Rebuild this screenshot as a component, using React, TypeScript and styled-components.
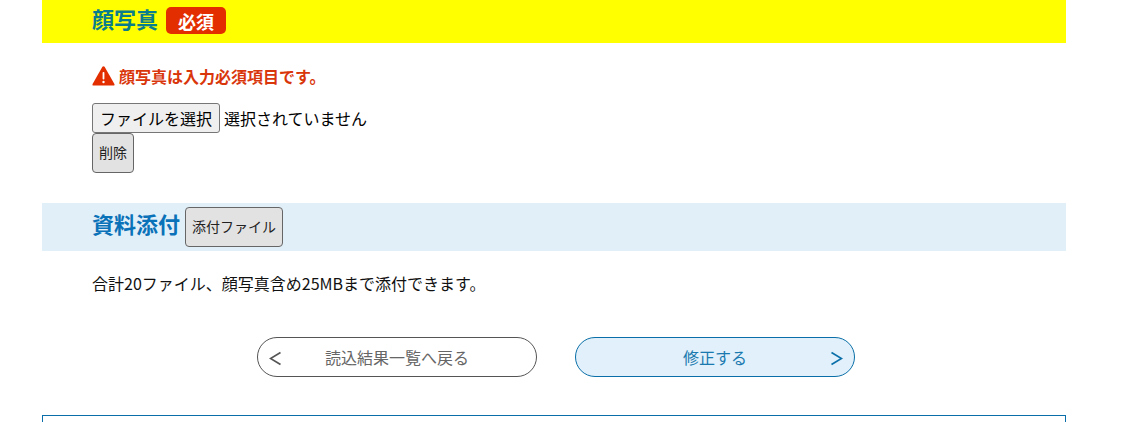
import React from 'react';
import styled, { createGlobalStyle } from 'styled-components';

const GlobalStyle = createGlobalStyle`
  html, body {
    margin: 0;
    padding: 0;
    height: 422px;
    overflow: hidden;
    background: #fff;
    color: #000;
    font-family: "Noto Sans CJK JP", "Noto Sans", sans-serif;
  }
`;

// == styles =======================================================================================
const Page = styled.div`
  width: 1024px;
  margin-left: 42px;
`;

const SectionHead = styled.div<{ $bg: string; $height: number; $gap: number }>`
  display: flex;
  align-items: center;
  gap: ${ ( { $gap } ) => $gap }px;
  height: ${ ( { $height } ) => $height }px;
  padding-left: 50px;
  background: ${ ( { $bg } ) => $bg };
`;

const Title = styled.h2<{ $color: string; $lift: number }>`
  margin: 0 0 ${ ( { $lift } ) => $lift }px;
  font-size: 22px;
  line-height: 28px;
  font-weight: 700;
  color: ${ ( { $color } ) => $color };
`;

const Required = styled.span`
  display: flex;
  align-items: center;
  justify-content: center;
  width: 60px;
  height: 27px;
  margin-bottom: 2px;
  border-radius: 5px;
  background: #e32e00;
  color: #fff;
  font-size: 18px;
  font-weight: 700;
`;

const Body = styled.div`
  padding: 21px 0 30px 50px;
`;

const ErrorRow = styled.div`
  display: flex;
  align-items: center;
  height: 24px;
  color: #d9360b;
  font-size: 16px;
  font-weight: 700;
`;

const ErrorIcon = styled.svg`
  width: 23px;
  height: 20px;
  margin-right: 4px;
`;

const FileRow = styled.div`
  display: flex;
  align-items: center;
  height: 30px;
  margin-top: 15px;
  font-size: 16px;
`;

const FileButton = styled.button`
  width: 128px;
  height: 30px;
  padding: 0;
  margin-right: 4px;
  border: 1px solid #767676;
  border-radius: 3px;
  background: #efefef;
  color: #000;
  font: 16px "Noto Sans CJK JP", sans-serif;
`;

const SmallButton = styled.button<{ $width: number }>`
  display: block;
  width: ${ ( { $width } ) => $width }px;
  height: 40px;
  padding: 0 0 2px;
  border: 1px solid #666;
  border-radius: 4px;
  background: #e2e2e2;
  color: #222;
  font: 14px "Noto Sans CJK JP", sans-serif;
`;

const Note = styled.p`
  margin: 0;
  padding: 21px 0 0 50px;
  font-size: 16px;
  line-height: 22px;
  color: #111;
`;

const Actions = styled.div`
  display: flex;
  gap: 38px;
  margin: 43px 0 0 215px;
`;

const NavButton = styled.button<{ $primary?: boolean }>`
  display: flex;
  align-items: center;
  justify-content: center;
  position: relative;
  width: 280px;
  height: 40px;
  padding: 0;
  border: 1px solid ${ ( { $primary } ) => ( $primary ? '#0a6fa8' : '#555' ) };
  border-radius: 20px;
  background: ${ ( { $primary } ) => ( $primary ? '#e1f0fa' : '#fff' ) };
  color: ${ ( { $primary } ) => ( $primary ? '#1a7ab0' : '#666' ) };
  font: 16px "Noto Sans CJK JP", sans-serif;
`;

const Chevron = styled.svg<{ $side: 'left' | 'right' }>`
  position: absolute;
  top: 13px;
  ${ ( { $side } ) => $side }: 11px;
  width: 13px;
  height: 15px;
`;

const Footer = styled.div`
  height: 6px;
  margin-top: 38px;
  border: 1px solid #0a6fa8;
  border-bottom: none;
`;

// == components ===================================================================================
export default function App(): React.JSX.Element {
  return (
    <>
      <GlobalStyle />
      <Page>
        <SectionHead $bg="#ffff00" $height={ 43 } $gap={ 8 }>
          <Title $color="#0a7d8c" $lift={ 7 }>顔写真</Title>
          <Required>必須</Required>
        </SectionHead>
        <Body>
          <ErrorRow>
            <ErrorIcon viewBox="0 0 23 20">
              <path d="M10.4 0.8 Q11.5 -0.3 12.6 0.8 L22.4 18 Q23 19.6 21.4 19.6 L1.6 19.6 Q0 19.6 0.6 18 Z" fill="#e32e00" />
              <rect x="10.6" y="6" width="1.8" height="7.5" rx="0.8" fill="#fff" />
              <circle cx="11.5" cy="16" r="1.2" fill="#fff" />
            </ErrorIcon>
            顔写真は入力必須項目です。
          </ErrorRow>
          <FileRow>
            <FileButton type="button">ファイルを選択</FileButton>
            選択されていません
          </FileRow>
          <SmallButton type="button" $width={ 42 }>削除</SmallButton>
        </Body>
        <SectionHead $bg="#e1eff9" $height={ 48 } $gap={ 5 }>
          <Title $color="#0a72b8" $lift={ 8 }>資料添付</Title>
          <SmallButton type="button" $width={ 98 }>添付ファイル</SmallButton>
        </SectionHead>
        <Note>合計20ファイル、顔写真含め25MBまで添付できます。</Note>
        <Actions>
          <NavButton type="button">
            <Chevron $side="left" viewBox="0 0 13 15">
              <path d="M11.5 1.5 L1.5 7.5 L11.5 13.5" fill="none" stroke="#555" strokeWidth="1.7" />
            </Chevron>
            読込結果一覧へ戻る
          </NavButton>
          <NavButton type="button" $primary>
            修正する
            <Chevron $side="right" viewBox="0 0 13 15">
              <path d="M1.5 1.5 L11.5 7.5 L1.5 13.5" fill="none" stroke="#0a6fa8" strokeWidth="1.7" />
            </Chevron>
          </NavButton>
        </Actions>
        <Footer />
      </Page>
    </>
  );
}
